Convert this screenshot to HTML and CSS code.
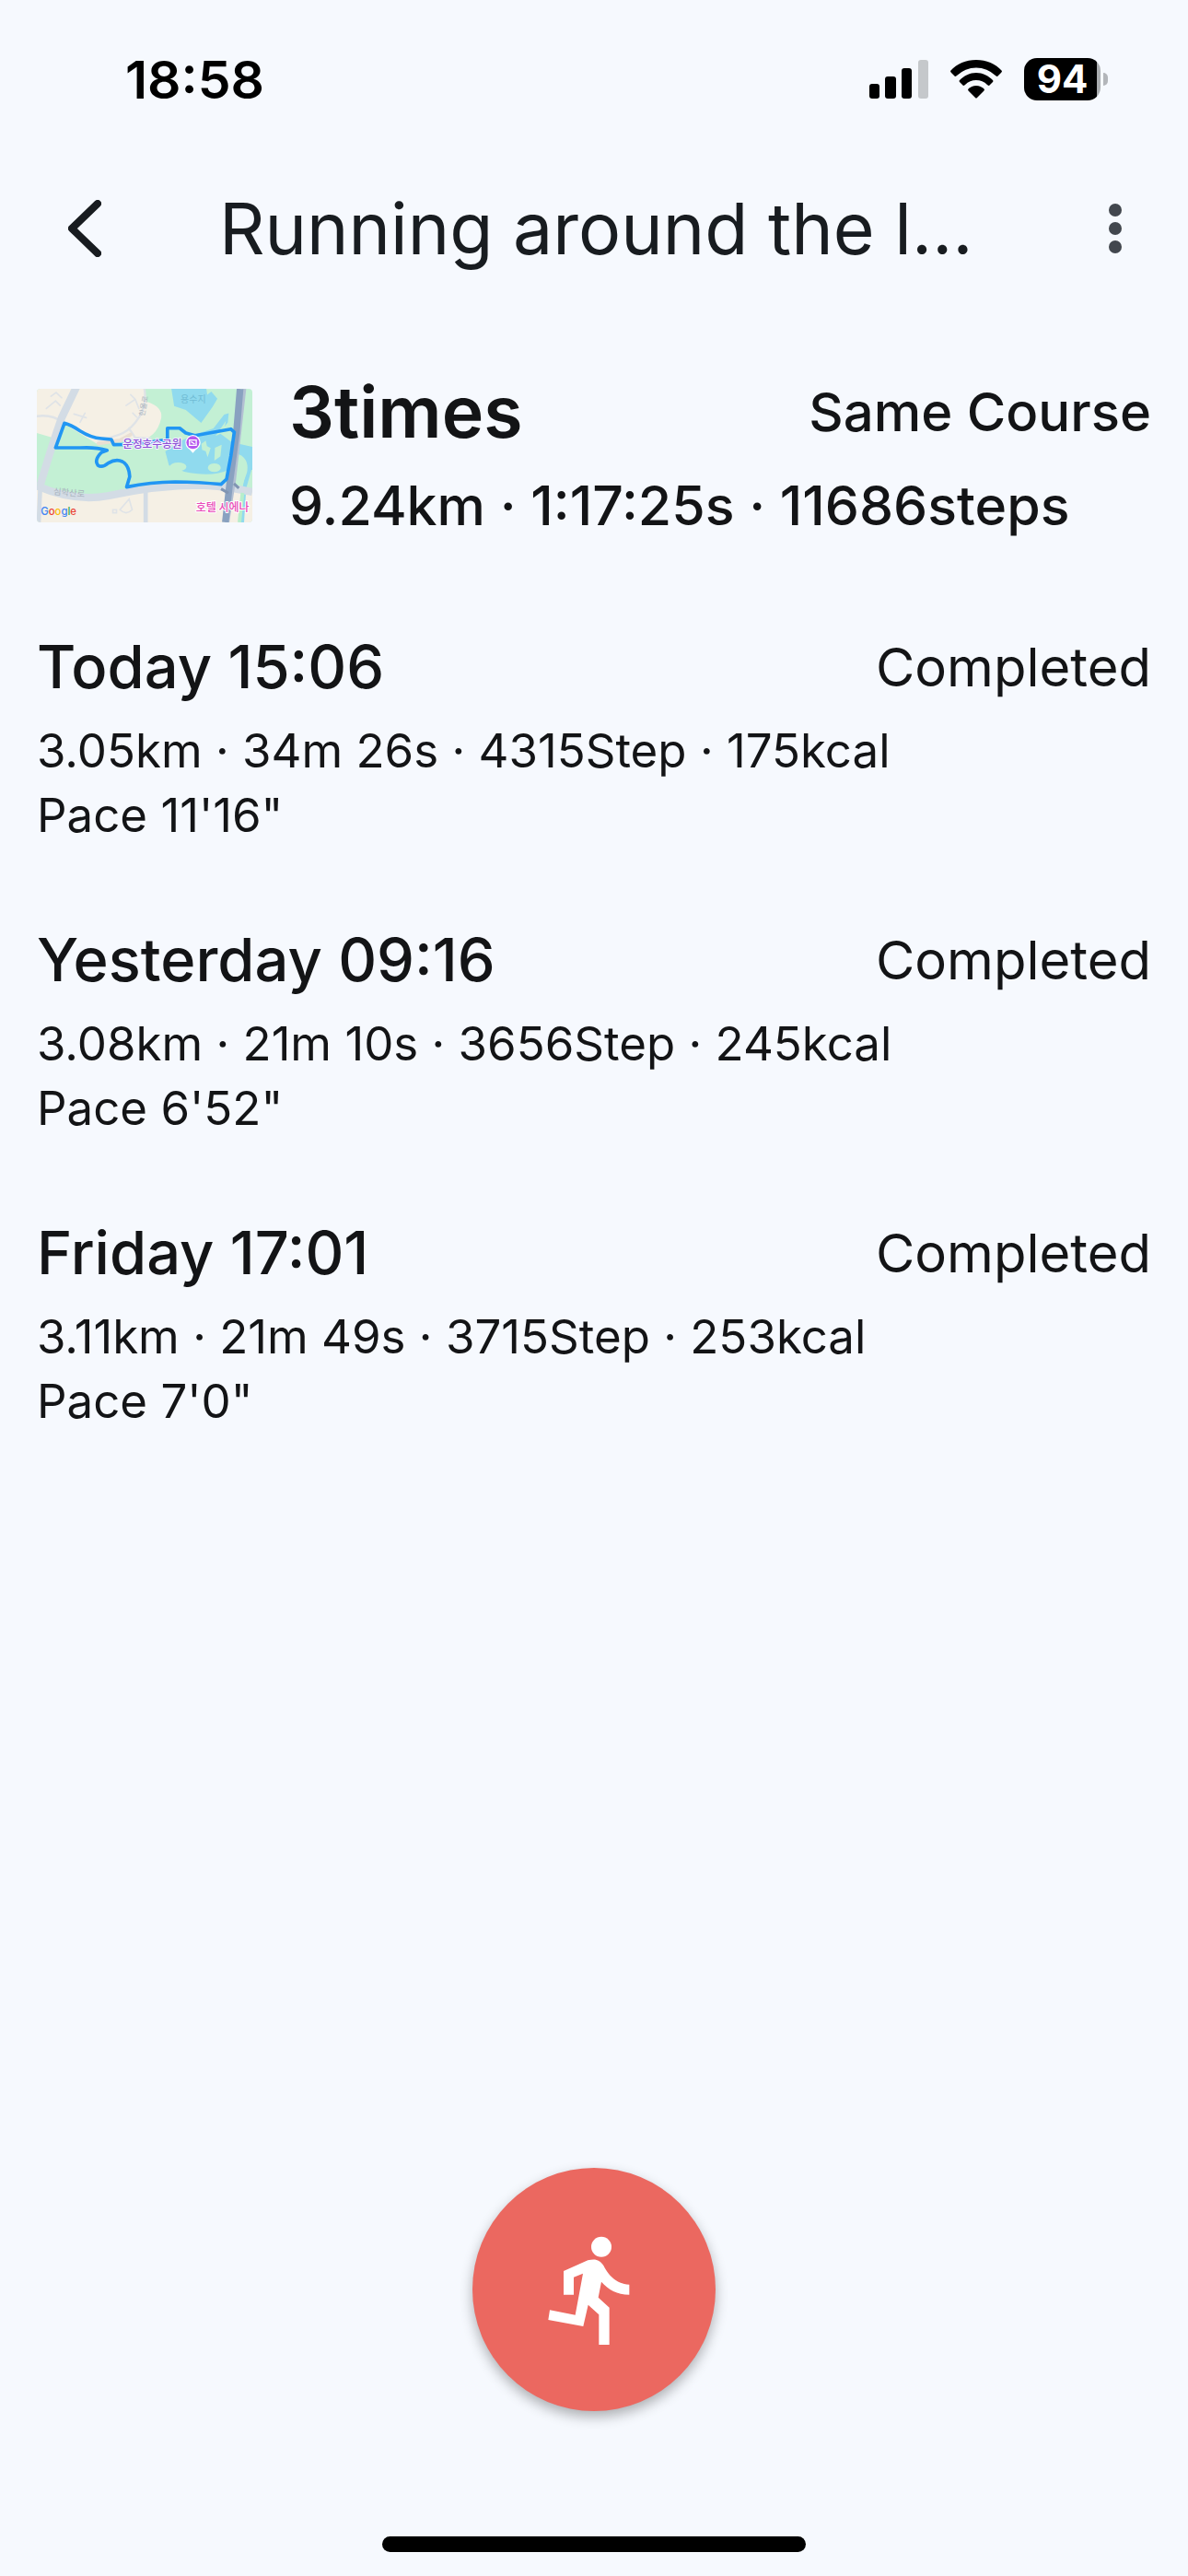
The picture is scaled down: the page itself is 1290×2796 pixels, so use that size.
FILE: index.html
```html
<!DOCTYPE html>
<html lang="en">
<head>
<meta charset="utf-8">
<meta name="viewport" content="width=device-width, initial-scale=1">
<title>Running around the lake</title>
<link rel="stylesheet" href="styles.css">
</head>
<body>
<div class="screen">
  <div class="status-bar">
    <time class="clock">18:58</time>
    <div class="status-icons">
      <svg class="signal" viewBox="0 0 64 42" aria-hidden="true">
        <rect x="0" y="26" width="11" height="16" rx="3"/>
        <rect x="17" y="18" width="12" height="24" rx="3"/>
        <rect x="35" y="9" width="11" height="33" rx="3"/>
        <rect x="53" y="0" width="11" height="42" rx="3" fill="#c5c8cb"/>
      </svg>
      <svg class="wifi" viewBox="0 0 56 42" aria-hidden="true">
        <path d="M28 0C39 0 49 4 56 12Q56 13 55 14L51 18Q50 18 49 17A30 30 0 0 0 7 17Q6 18 5 18L1 14Q0 13 0 12C7 4 17 0 28 0Z"/>
        <path d="M28 14C35 14 41 17 46 22Q47 23 46 24L42 28Q41 28 40 27A17 17 0 0 0 16 27Q15 28 14 28L10 24Q9 23 10 22C15 17 21 14 28 14Z"/>
        <path d="M28 28Q33 28 37 32Q37 33 36 34L29 41Q28 42 27 41L20 34Q19 33 19 32Q23 28 28 28Z"/>
      </svg>
      <div class="battery"><span class="battery-level">94</span></div>
    </div>
  </div>

  <header class="app-bar">
    <button class="icon-button" type="button" aria-label="Back">
      <svg class="icon-back" viewBox="0 0 36 62" aria-hidden="true"><path d="M32 4L4 31l28 27"/></svg>
    </button>
    <h1 class="title">Running around the l…</h1>
    <button class="icon-button icon-button-end" type="button" aria-label="More options">
      <svg class="icon-more" viewBox="0 0 14 54" aria-hidden="true"><circle cx="7" cy="7" r="7"/><circle cx="7" cy="27" r="7"/><circle cx="7" cy="47" r="7"/></svg>
    </button>
  </header>

  <main class="content">
    <section class="summary">
      <svg class="map" viewBox="29 36 703 435" role="img" aria-label="Course map">
        <rect x="29" y="36" width="703" height="435" fill="#c3f0d4"/>
        <path fill="#f5f0e5" d="M29 36H380L388 78Q440 95 435 130Q420 200 355 205Q330 190 320 200L230 218L118 150L80 195L29 180Z"/>
        <path fill="#f5f0e5" d="M29 365Q160 420 380 372Q520 350 732 372V471H29Z"/>
        <g fill="#90daee">
          <path d="M468 36H582L585 55L598 45L618 68L602 95L565 147L515 105L477 92Z"/>
          <path d="M448 240L500 205L560 180L605 165L640 120L655 115L652 145L625 180L665 210L732 225V300L655 300Q600 325 510 306L460 285Z"/>
          <path d="M715 280L732 290L712 360L705 471H695L700 360Z"/>
        </g>
        <g fill="#c3f0d4">
          <ellipse cx="490" cy="290" rx="27" ry="14"/><ellipse cx="608" cy="293" rx="21" ry="14"/>
          <path d="M566 215l14-10 4 18 12 6-10 30-6-20-12-4zM612 190l34-50-8 38zM610 228l22-10-4 38-20 14z"/>
          <path d="M678 245Q725 260 714 310L700 350L670 345Z"/>
        </g>
        <g fill="none" stroke="#dfe3e7" stroke-linecap="round">
          <path stroke-width="7" d="M29 125Q80 118 112 145M380 36Q388 90 365 125Q340 165 310 180Q280 195 235 198M330 165L350 195L400 198"/>
          <path stroke-width="12" stroke="#e9dfd3" d="M230 214L300 204L335 185"/>
          <path stroke-width="5" d="M60 100L90 75L105 90M75 60L92 48L110 65M150 118L190 130M170 145L186 115M320 90L350 70L335 55M350 70L362 100M342 115L355 128M277 430h12v10h-12zM300 430L330 395L340 430Q320 450 300 430"/>
        </g>
        <g fill="none" stroke="#d3dce5">
          <path stroke-width="25" d="M158 30L110 130Q75 230 40 350M29 352Q150 405 260 385Q420 350 560 350Q640 352 732 372"/>
          <path stroke-width="14" d="M384 365V471M40 360L35 471"/>
          <path stroke-width="12" stroke="#b7eecb" d="M700 375L690 471"/>
        </g>
        <path fill="none" stroke="#b3c0d3" stroke-width="14" d="M705 36L672 330L650 471"/>
        <path fill="none" stroke="#89a1c0" stroke-width="22" d="M692 36L680 180L658 345L644 471"/>
        <path fill="none" stroke="#8095b2" stroke-width="9" d="M630 362L654 376M672 345L688 360"/>
        <g fill="#a8b2bd">
          <text x="82" y="380" font-size="28" transform="rotate(5 82 380)">심학산로</text>
          <text x="498" y="82" font-size="30" fill="#70bcd5">용수지</text>
          <text x="380" y="126" font-size="24" transform="rotate(-80 380 126)">한울로</text>
        </g>
        <path fill="none" stroke="#2196f3" stroke-width="11" stroke-linejoin="round" stroke-linecap="round" d="M90 228L119 148Q140 153 170 173Q205 195 240 198L272 201L280 218L330 217L410 208L455 202V164H495L515 180L545 188L662 167L673 177L662 255L648 330L630 347Q560 340 480 339Q400 340 322 356L332 322Q330 285 308 273Q287 263 262 278Q242 295 228 285Q215 268 240 243L258 236Q220 225 170 228Z"/>
        <text class="map-label" x="309" y="227" font-size="35" fill="#8b50d5" stroke="#f4f0ff">운정호수공원</text>
        <path fill="#fff" d="M538 186A25 25 0 0 1 563 212Q562 225 548 234L538 245L528 234Q514 226 514 212A25 25 0 0 1 538 186Z"/>
        <circle cx="538" cy="211" r="21" fill="#b557ee"/>
        <path fill="none" stroke="#fff" stroke-width="4" d="M527 203h22v17h-22zM532 208l12 8"/>
        <text class="map-label" x="548" y="436" font-size="36" fill="#e94bb8" stroke="#fff">호텔 시에나</text>
        <text class="map-logo" x="42" y="447" font-size="34"><tspan fill="#4285f4">G</tspan><tspan fill="#ea4335">o</tspan><tspan fill="#fbbc05">o</tspan><tspan fill="#4285f4">g</tspan><tspan fill="#34a853">l</tspan><tspan fill="#ea4335">e</tspan></text>
      </svg>
      <div class="summary-text">
        <div class="summary-head">
          <h2 class="summary-count">3times</h2>
          <span class="summary-tag">Same Course</span>
        </div>
        <p class="summary-total">9.24km · 1:17:25s · 11686steps</p>
      </div>
    </section>

    <ul class="runs">
      <li class="run">
        <div class="run-head"><h3 class="run-time">Today 15:06</h3><span class="run-state">Completed</span></div>
        <p class="run-meta">3.05km · 34m 26s · 4315Step · 175kcal</p>
        <p class="run-meta">Pace 11'16"</p>
      </li>
      <li class="run">
        <div class="run-head"><h3 class="run-time">Yesterday 09:16</h3><span class="run-state">Completed</span></div>
        <p class="run-meta">3.08km · 21m 10s · 3656Step · 245kcal</p>
        <p class="run-meta">Pace 6'52"</p>
      </li>
      <li class="run">
        <div class="run-head"><h3 class="run-time">Friday 17:01</h3><span class="run-state">Completed</span></div>
        <p class="run-meta">3.11km · 21m 49s · 3715Step · 253kcal</p>
        <p class="run-meta">Pace 7'0"</p>
      </li>
    </ul>
  </main>

  <footer class="dock">
    <button class="run-button" type="button" aria-label="Start run">
      <svg class="icon-run" viewBox="237 235 396 396" aria-hidden="true">
        <circle cx="459" cy="294" r="33"/>
        <path d="M336 373L415 338C440 331 454 337 466 355C480 383 505 415 550 417V450C510 450 482 434 459 408L449 459L485 492V613H451V515L416 483L400 553L286 532L291 500L374 516L399 381L369 393V450H336Z"/>
      </svg>
    </button>
    <div class="home-indicator"></div>
  </footer>
</div>
</body>
</html>
```

FILE: styles.css
```css
* {
  box-sizing: border-box;
}

body {
  margin: 0;
  background: #f6f9fe;
  color: #131416;
  font-family: Inter, "Liberation Sans", "Noto Sans CJK KR", sans-serif;
}

h1, h2, h3, p, ul {
  margin: 0;
  padding: 0;
}

button {
  margin: 0;
  padding: 0;
  border: 0;
  background: none;
  color: inherit;
  font: inherit;
}

svg {
  display: block;
  flex: none;
}

.screen {
  display: flex;
  flex-direction: column;
  min-height: 100vh;
}

.status-bar {
  display: flex;
  justify-content: space-between;
  align-items: center;
  height: 172px;
  padding: 0 87px 0 136px;
  color: #000;
}

.clock {
  font-size: 57px;
  font-weight: 600;
}

.status-icons {
  display: flex;
  align-items: center;
  gap: 24px;
}

.signal {
  width: 64px;
  height: 42px;
}

.wifi {
  width: 56px;
  height: 42px;
}

.battery {
  display: flex;
  align-items: center;
  gap: 3px;
}

.battery::after {
  content: "";
  width: 5px;
  height: 14px;
  border-radius: 0 5px 5px 0;
  background: #b3b6ba;
}

.battery-level {
  width: 83px;
  border-radius: 14px;
  background: linear-gradient(90deg, #000 79px, #a9acaf 79px);
  color: #fff;
  font-size: 42px;
  font-weight: 700;
  line-height: 46px;
  text-align: center;
}

.app-bar {
  display: flex;
  align-items: center;
  height: 152px;
  padding: 0 38px 0 40px;
}

.icon-button {
  display: flex;
  align-items: center;
  width: 144px;
  height: 144px;
  padding: 0 34px;
}

.icon-button-end {
  justify-content: flex-end;
}

.icon-back {
  width: 36px;
  height: 62px;
  fill: none;
  stroke: #181c20;
  stroke-width: 8;
  stroke-linecap: round;
  stroke-linejoin: round;
}

.icon-more {
  width: 14px;
  height: 54px;
  fill: #42474e;
}

.title {
  flex: 1;
  padding-left: 54px;
  color: #181c20;
  font-size: 77px;
  font-weight: 400;
  line-height: 112px;
  white-space: nowrap;
}

.content {
  padding: 72px 40px;
}

.summary {
  display: flex;
  align-items: center;
  gap: 40px;
}

.map {
  width: 234px;
  height: 145px;
  margin-bottom: 8px;
  border-radius: 4px;
}

.map text {
  font-family: "Noto Sans CJK KR", sans-serif;
}

.map .map-label {
  font-weight: 500;
  stroke-width: 6px;
  paint-order: stroke;
}

.map .map-logo {
  font-family: Inter, sans-serif;
  font-weight: 500;
}

.summary-text {
  flex: 1;
}

.summary-head,
.run-head {
  display: flex;
  justify-content: space-between;
  align-items: center;
}

.summary-count {
  font-size: 77px;
  font-weight: 600;
  line-height: 102px;
}

.summary-tag {
  font-size: 58px;
  font-weight: 450;
  line-height: 102px;
}

.summary-total {
  font-size: 59px;
  font-weight: 500;
  line-height: 102px;
}

.runs {
  display: grid;
  gap: 66px;
  margin-top: 68px;
  list-style: none;
}

.run-time {
  font-size: 65px;
  font-weight: 500;
  line-height: 112px;
}

.run-state {
  font-size: 58px;
  line-height: 108px;
}

.run-meta {
  font-size: 51px;
  line-height: 70px;
}

.dock {
  display: flex;
  flex-direction: column;
  align-items: center;
  gap: 136px;
  margin-top: auto;
  padding-bottom: 26px;
}

.run-button {
  display: grid;
  place-items: center;
  width: 264px;
  height: 264px;
  border-radius: 50%;
  background: #eb6860;
  box-shadow: 0 6px 14px rgba(0, 0, 0, 0.3);
}

.icon-run {
  width: 132px;
  height: 132px;
  fill: #fff;
}

.home-indicator {
  width: 460px;
  height: 17px;
  border-radius: 9px;
  background: #000;
}
```
